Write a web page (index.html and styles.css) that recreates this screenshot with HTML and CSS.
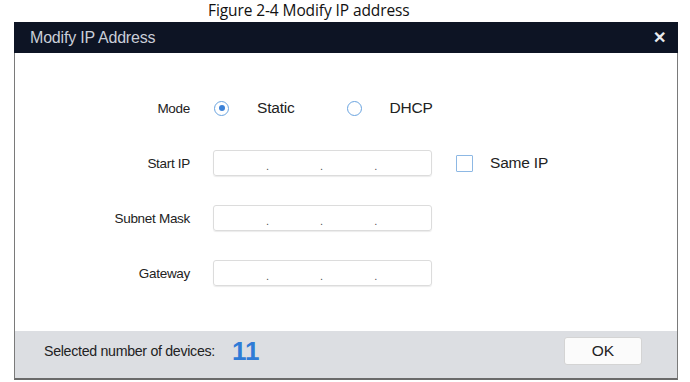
FILE: index.html
```html
<!DOCTYPE html>
<html>
<head>
<meta charset="utf-8">
<link rel="stylesheet" href="styles.css">
</head>
<body>
<div class="caption">Figure 2-4 Modify IP address</div>
<div class="dialog">
  <div class="titlebar">
    <span class="title">Modify IP Address</span>
    <span class="close">✕</span>
  </div>
  <div class="content">
    <div class="row mode-row">
      <div class="label">Mode</div>
      <div class="options">
        <span class="radio checked"></span><span class="opt-text">Static</span>
        <span class="radio"></span><span class="opt-text">DHCP</span>
      </div>
    </div>
    <div class="row">
      <div class="label">Start IP</div>
      <div class="ipbox"><span>.</span><span>.</span><span>.</span></div>
      <span class="checkbox"></span><span class="opt-text">Same IP</span>
    </div>
    <div class="row">
      <div class="label">Subnet Mask</div>
      <div class="ipbox"><span>.</span><span>.</span><span>.</span></div>
    </div>
    <div class="row">
      <div class="label">Gateway</div>
      <div class="ipbox"><span>.</span><span>.</span><span>.</span></div>
    </div>
  </div>
  <div class="footer">
    <span class="count-label">Selected number of devices:</span>
    <span class="count">11</span>
    <button class="ok">OK</button>
  </div>
</div>
</body>
</html>
```
FILE: styles.css
```css
html, body {
  margin: 0;
  padding: 0;
  background: #ffffff;
}
body {
  width: 690px;
  height: 382px;
  font-family: "Liberation Sans", Arial, sans-serif;
  color: #222;
}
.caption {
  font-family: "Open Sans", "Noto Sans", sans-serif;
  font-size: 15.5px;
  letter-spacing: -0.1px;
  height: 22px;
  line-height: 20px;
  padding-left: 208px;
  color: #111;
}
.dialog {
  margin-left: 14px;
  width: 664px;
  box-sizing: border-box;
  border-left: 1px solid #7a7a7a;
  border-right: 1px solid #7a7a7a;
  border-bottom: 2px solid #6a6a6a;
  display: flex;
  flex-direction: column;
}
.titlebar {
  height: 31px;
  background: #0d1424;
  display: flex;
  align-items: center;
  justify-content: space-between;
  padding: 0 12px 0 16px;
  margin: 0 -1px;
}
.title {
  color: #c9ced8;
  font-size: 16px;
  letter-spacing: -0.2px;
}
.close {
  color: #e8eaee;
  font-size: 16px;
  font-weight: bold;
}
.content {
  height: 278px;
  padding-top: 42px;
  box-sizing: border-box;
  display: flex;
  flex-direction: column;
  gap: 29px;
}
.row {
  display: flex;
  align-items: center;
  height: 26px;
}
.label {
  width: 175px;
  text-align: right;
  font-size: 13.5px;
  letter-spacing: -0.3px;
  margin-right: 23px;
  color: #222;
}
.options {
  display: flex;
  align-items: center;
}
.radio {
  width: 15px;
  height: 15px;
  border: 1.5px solid #6aa4e0;
  border-radius: 50%;
  box-sizing: border-box;
  display: inline-flex;
  align-items: center;
  justify-content: center;
  margin-left: 1px;
}
.radio.checked::after {
  content: "";
  width: 6px;
  height: 6px;
  border-radius: 50%;
  background: #3c82d8;
}
.opt-text {
  font-size: 15.5px;
  letter-spacing: -0.2px;
  color: #222;
}
.options .radio + .opt-text {
  margin-left: 28px;
}
.options .opt-text:nth-child(2) {
  margin-right: 51px;
}
.ipbox {
  width: 219px;
  height: 26px;
  box-sizing: border-box;
  border: 1px solid #dcdcdc;
  border-radius: 3px;
  box-shadow: 0 1px 1px rgba(0,0,0,0.08);
  display: flex;
  align-items: flex-end;
  padding: 0 0 3px 52px;
  gap: 51px;
  font-size: 11px;
  color: #555;
  line-height: 12px;
}
.checkbox {
  width: 17px;
  height: 17px;
  box-sizing: border-box;
  border: 1.5px solid #8db8e4;
  border-radius: 1px;
  margin-left: 24px;
  margin-right: 17px;
}
.footer {
  height: 47px;
  box-sizing: border-box;
  padding: 0 35px 7px 29px;
  background: #dcdee2;
  display: flex;
  align-items: center;
}
.count-label {
  font-size: 14.2px;
  letter-spacing: -0.3px;
  color: #222;
}
.count {
  font-size: 26px;
  font-weight: bold;
  color: #2f7bd6;
  margin-left: 17px;
}
.ok {
  margin-left: auto;
  width: 78px;
  height: 28px;
  background: #fbfbfb;
  border: 1px solid #d4d4d4;
  border-radius: 3px;
  font-family: "Liberation Sans", Arial, sans-serif;
  font-size: 15.5px;
  color: #222;
  padding: 0;
}
```
